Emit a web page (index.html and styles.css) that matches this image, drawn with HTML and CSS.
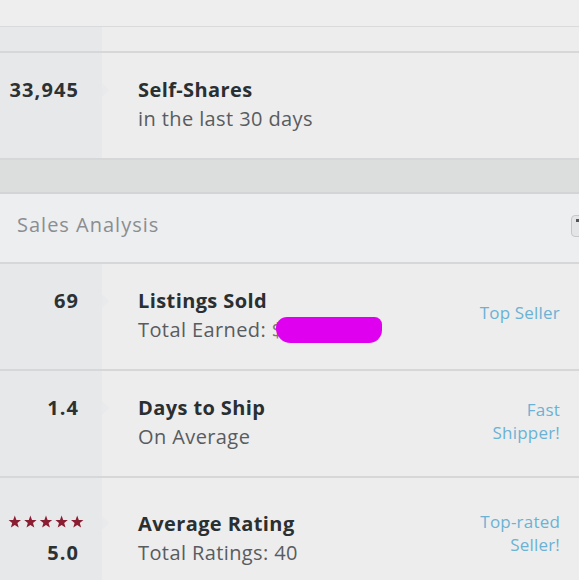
FILE: index.html
```html
<!DOCTYPE html>
<html>
<head>
<meta charset="utf-8">
<link rel="stylesheet" href="styles.css">
</head>
<body>
<div class="page">
  <div class="top"></div>
  <div class="row row-stub">
    <div class="num"></div>
    <div class="body"></div>
  </div>
  <div class="row">
    <div class="num"><span class="val">33,945</span></div>
    <div class="body">
      <div class="title">Self-Shares</div>
      <div class="sub">in the last 30 days</div>
    </div>
  </div>
  <div class="gap"></div>
  <div class="header">
    <div class="header-title">Sales Analysis</div>
    <div class="toggle"><span class="caret"></span></div>
  </div>
  <div class="row row-tall">
    <div class="num"><span class="val">69</span></div>
    <div class="body">
      <div class="title">Listings Sold</div>
      <div class="sub">Total Earned: <span class="dollar">$</span><span class="redact"></span></div>
    </div>
    <div class="badge badge-one">Top Seller</div>
  </div>
  <div class="row row-tall">
    <div class="num"><span class="val">1.4</span></div>
    <div class="body">
      <div class="title">Days to Ship</div>
      <div class="sub">On Average</div>
    </div>
    <div class="badge badge-two">Fast<br>Shipper!</div>
  </div>
  <div class="row row-rating">
    <div class="num">
      <div class="stars">
        <svg viewBox="0 0 76 14" width="76" height="14">
          <g fill="#8a1d31">
            <polygon points="6.8,0.5 8.4,4.9 13,5.1 9.4,8 10.7,12.6 6.8,10 2.9,12.6 4.2,8 0.6,5.1 5.2,4.9"/>
            <polygon transform="translate(15.6 0)" points="6.8,0.5 8.4,4.9 13,5.1 9.4,8 10.7,12.6 6.8,10 2.9,12.6 4.2,8 0.6,5.1 5.2,4.9"/>
            <polygon transform="translate(31.2 0)" points="6.8,0.5 8.4,4.9 13,5.1 9.4,8 10.7,12.6 6.8,10 2.9,12.6 4.2,8 0.6,5.1 5.2,4.9"/>
            <polygon transform="translate(46.8 0)" points="6.8,0.5 8.4,4.9 13,5.1 9.4,8 10.7,12.6 6.8,10 2.9,12.6 4.2,8 0.6,5.1 5.2,4.9"/>
            <polygon transform="translate(62.4 0)" points="6.8,0.5 8.4,4.9 13,5.1 9.4,8 10.7,12.6 6.8,10 2.9,12.6 4.2,8 0.6,5.1 5.2,4.9"/>
          </g>
        </svg>
      </div>
      <span class="val val-rating">5.0</span>
    </div>
    <div class="body">
      <div class="title">Average Rating</div>
      <div class="sub">Total Ratings: 40</div>
    </div>
    <div class="badge badge-three">Top-rated<br>Seller!</div>
  </div>
</div>
</body>
</html>
```
FILE: styles.css
```css
html, body {
  margin: 0;
  padding: 0;
  background: #ededee;
  overflow: hidden;
}
body {
  font-family: "Open Sans", Lato, sans-serif;
  width: 579px;
  height: 580px;
}
.page {
  display: flex;
  flex-direction: column;
  width: 579px;
  height: 580px;
}
.top {
  flex: none;
  height: 26px;
  background: #eeeeef;
  border-bottom: 1px solid #d9dadb;
}
.row {
  flex: none;
  display: flex;
  box-sizing: border-box;
  height: 107px;
  border-bottom: 2px solid #d6d7d8;
  background: #ededee;
}
.row-tall { height: 107px; }
.row-stub {
  height: 26px;
}
.num {
  position: relative;
  width: 102px;
  flex: none;
  background: #e7e8e9;
  box-sizing: border-box;
  padding: 24px 24px 0 0;
  text-align: right;
}
.num::after {
  content: "";
  position: absolute;
  right: -7px;
  top: 30px;
  border-left: 7px solid #e9eaeb;
  border-top: 7px solid transparent;
  border-bottom: 7px solid transparent;
}
.row-stub .num::after { display: none; }
.val {
  display: block;
  font-size: 20px;
  font-weight: 700;
  letter-spacing: 1.1px;
  margin-right: -1px;
  line-height: 26px;
  color: #2c3134;
}
.body {
  flex: 1;
  padding: 24px 0 0 36px;
}
.title {
  font-size: 20px;
  font-weight: 700;
  letter-spacing: 0.4px;
  line-height: 26px;
  color: #2a2f31;
}
.sub {
  font-size: 20px;
  letter-spacing: 0.4px;
  line-height: 32px;
  color: #585c5f;
  white-space: nowrap;
}
.dollar { color: #777; }
.redact {
  display: inline-block;
  vertical-align: middle;
  width: 106px;
  height: 26px;
  margin-left: -8px;
  margin-top: -4px;
  background: #e000f0;
  border-radius: 12px 8px 14px 16px;
}
.badge {
  flex: none;
  text-align: right;
  padding-right: 19px;
  font-size: 17px;
  letter-spacing: 0.2px;
  line-height: 23px;
  color: #6bb2d4;
}
.badge-one { padding-top: 37px; }
.badge-two { padding-top: 27px; }
.badge-three { padding-top: 32px; }
.gap {
  flex: none;
  box-sizing: border-box;
  height: 34px;
  background: #dcdddd;
  border-bottom: 2px solid #d3d4d5;
}
.header {
  flex: none;
  box-sizing: border-box;
  display: flex;
  justify-content: space-between;
  align-items: center;
  height: 70px;
  border-bottom: 2px solid #d6d7d8;
  background: #edeeef;
}
.header-title {
  padding-left: 17px;
  margin-bottom: 8px;
  font-size: 20px;
  letter-spacing: 1px;
  color: #8b8d8f;
}
.toggle {
  width: 30px;
  height: 22px;
  margin-right: -22px;
  margin-bottom: 4px;
  box-sizing: border-box;
  border: 1px solid #c6c7c8;
  border-radius: 4px;
  background: #e4e5e6;
  position: relative;
}
.caret {
  position: absolute;
  left: 4px;
  top: 3px;
  width: 3px;
  height: 3px;
  background: #555;
}
.row-rating {
  border-bottom: none;
  flex: 1;
}
.row-rating .num { padding-top: 37px; }
.row-rating .num::after { top: 38px; }
.row-rating .body { padding-top: 33px; }
.stars {
  display: flex;
  justify-content: flex-end;
  margin-right: -6px;
  height: 14px;
}
.val-rating {
  margin-top: 11px;
}
```
